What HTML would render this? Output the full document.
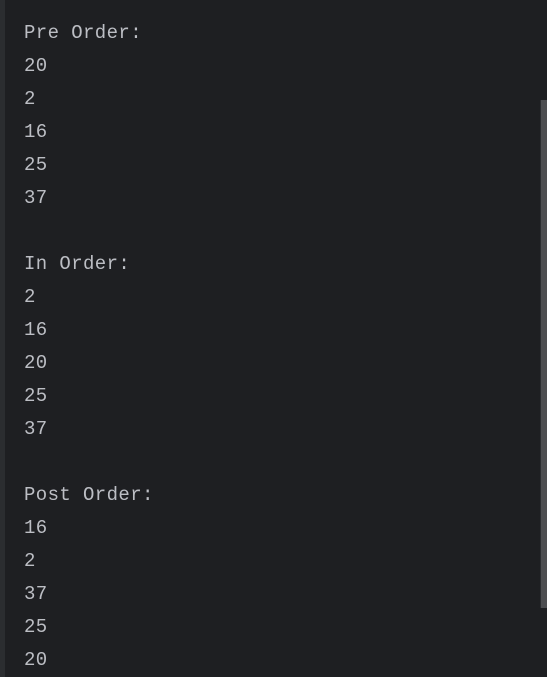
<!DOCTYPE html>
<html><head><style>
html,body{margin:0;padding:0;}
body{width:547px;height:677px;background:#1e1f22;position:relative;overflow:hidden;}
.l{position:absolute;left:0;top:0;width:5px;height:677px;background:#2b2d30;}
.sb{position:absolute;left:540px;top:100px;width:7px;height:508px;background:#4d4e51;border-left:1px solid #2b2d30;}
pre{position:absolute;left:24px;top:17px;margin:0;font-family:"Liberation Mono",monospace;font-size:19px;letter-spacing:0.4px;line-height:33px;color:#bcbec4;}
</style></head><body>
<div class="l"></div>
<div class="sb"></div>
<pre>Pre Order:
20
2
16
25
37

In Order:
2
16
20
25
37

Post Order:
16
2
37
25
20</pre>
</body></html>
